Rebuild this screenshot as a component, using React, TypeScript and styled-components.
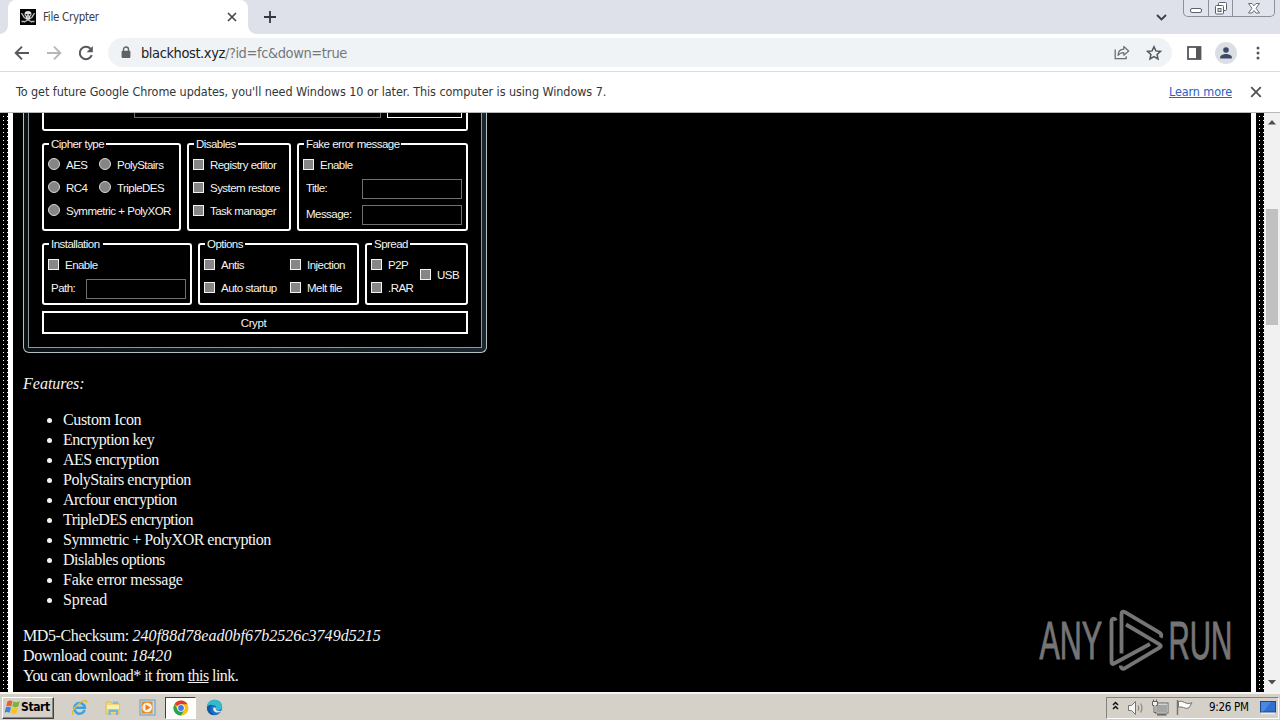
import React from 'react';
import styled, { createGlobalStyle } from 'styled-components';

const Global = createGlobalStyle`
  * { box-sizing: border-box; }
  html, body { margin: 0; padding: 0; background: #000; overflow: hidden; }
  ul, p { margin: 0; }
`;

const ui = `'DejaVu Sans Condensed', 'DejaVu Sans', sans-serif`;

const Screen = styled.div`
  width: 1280px;
  height: 720px;
  display: flex;
  flex-direction: column;
  overflow: hidden;
  font-family: ${ui};
`;

const TabStrip = styled.div`
  height: 34px;
  flex: none;
  display: flex;
  align-items: stretch;
  background: #dee1e9;
`;
const Tab = styled.div`
  position: relative;
  width: 240px;
  margin-left: 8px;
  background: #fff;
  border-radius: 8px 8px 0 0;
  display: flex;
  align-items: center;
  padding: 0 10px 0 12px;
  &::before, &::after {
    content: '';
    position: absolute;
    bottom: 0;
    width: 8px;
    height: 8px;
  }
  &::before { left: -8px; background: radial-gradient(circle at 0 0, transparent 7.5px, #fff 8px); }
  &::after { right: -8px; background: radial-gradient(circle at 100% 0, transparent 7.5px, #fff 8px); }
`;
const TabTitle = styled.span`
  flex: 1;
  margin-left: 7px;
  font-size: 11.5px;
  letter-spacing: -0.3px;
  color: #3c4043;
`;
const NewTab = styled.div`
  width: 44px;
  display: flex;
  align-items: center;
  justify-content: center;
`;
const Spacer = styled.div`flex: 1;`;
const TabSearch = styled.div`
  display: flex;
  align-items: center;
  margin-right: 16px;
`;
const Caption = styled.div`
  width: 92px;
  height: 17px;
  margin-right: 5px;
  display: flex;
  border: 1px solid #8b909a;
  border-top: 0;
  border-radius: 0 0 5px 5px;
  background: #e1e4ec;
`;
const CaptionButton = styled.div<{ $w: number }>`
  width: ${p => p.$w}px;
  display: flex;
  justify-content: center;
  & + & { border-left: 1px solid #8b909a; }
`;

const Toolbar = styled.div`
  height: 38px;
  flex: none;
  display: flex;
  align-items: center;
  background: #fff;
  border-bottom: 1px solid #dadce0;
  padding-left: 14px;
`;
const ToolButton = styled.div<{ $w: number }>`
  width: ${p => p.$w}px;
  flex: none;
  display: flex;
  align-items: center;
  justify-content: center;
`;
const Omnibox = styled.div`
  flex: none;
  width: 1064px;
  height: 29px;
  margin: 0 6px 0 14px;
  display: flex;
  align-items: center;
  padding: 0 2px 0 13px;
  border-radius: 15px;
  background: #f0f3f5;
`;
const Url = styled.span`
  flex: 1;
  margin-left: 10px;
  font-size: 14.5px;
  letter-spacing: -0.41px;
  color: #74787c;
  & b { font-weight: 400; color: #202124; }
`;
const Avatar = styled.div`
  width: 22px;
  height: 22px;
  border-radius: 50%;
  background: #dbdfe4;
  display: flex;
  align-items: center;
  justify-content: center;
`;

const InfoBar = styled.div`
  height: 41px;
  flex: none;
  display: flex;
  align-items: center;
  padding: 0 18px 1px 16px;
  background: #fff;
  border-bottom: 1px solid #b8b8b8;
  font-size: 12.5px;
  color: #333639;
`;
const InfoText = styled.span`
  flex: 1;
  letter-spacing: -0.07px;
`;
const InfoLink = styled.a`
  color: #2a62c4;
  text-decoration: underline;
  margin-right: 18px;
  letter-spacing: -0.1px;
`;

const Viewport = styled.div`
  height: 579px;
  flex: none;
  display: flex;
  background: #000;
`;
const Dots = styled.div`
  width: 8px;
  flex: none;
  background-color: #000;
  background-image: conic-gradient(from 90deg at 3px 3px, #fff 90deg, transparent 0);
  background-size: 4px 4px;
`;
const Page = styled.main`
  flex: 1;
  border: solid #fff;
  border-width: 0 5px;
  padding-left: 10px;
  overflow: hidden;
  background: #000;
  color: #f4f4f4;
  font-family: 'Liberation Serif', serif;
  font-size: 16px;
  line-height: 20px;
`;
const Scrollbar = styled.div`
  width: 16px;
  flex: none;
  background: #f1f1f1;
  display: flex;
  flex-direction: column;
  align-items: center;
  padding: 7px 0;
`;
const Thumb = styled.div`
  width: 12px;
  height: 116px;
  margin-top: 84px;
  background: #c1c1c1;
`;

const Frame = styled.div`
  width: 464px;
  height: 240px;
  padding: 0 4px 4px;
  border: 1px solid #b4bfc4;
  border-top: 0;
  border-radius: 0 0 6px 6px;
  background: linear-gradient(90deg, #0c1316, #111b1f 40%, #1a262d);
`;
const FrameBody = styled.div`
  height: 235px;
  padding: 0 13px;
  border: 1px solid #8d989d;
  border-top: 0;
  background: #000;
  font-family: 'Liberation Sans', sans-serif;
  font-size: 11.5px;
  line-height: 14px;
  letter-spacing: -0.54px;
  word-spacing: 0.2px;
  color: #f4f4f4;
  white-space: nowrap;
`;
const FileGroup = styled.div`
  height: 18px;
  border: 2px solid #fff;
  border-top: 0;
  border-radius: 0 0 3px 3px;
  display: flex;
  justify-content: flex-end;
  padding-right: 4px;
`;
const FileField = styled.div`
  width: 247px;
  height: 5px;
  border: 1px solid #6a6a6a;
  border-top: 0;
  margin-right: 6px;
`;
const BrowseButton = styled.div`
  width: 75px;
  height: 5px;
  border: 1px solid #fff;
  border-top: 0;
`;
const GroupRow = styled.div`
  display: flex;
  gap: 6px;
  margin-top: 12px;
`;
const Group = styled.section<{ $w: number; $h: number }>`
  position: relative;
  width: ${p => p.$w}px;
  height: ${p => p.$h}px;
  border: 2px solid #fff;
  border-radius: 3px;
  padding: 8px 4px 0;
`;
const Legend = styled.span<{ $w: number }>`
  position: absolute;
  top: -8px;
  left: 5px;
  width: ${p => p.$w}px;
  padding-left: 2px;
  background: #000;
`;
const Line = styled.div<{ $h?: number }>`
  display: flex;
  align-items: center;
  height: ${p => p.$h ?? 23}px;
`;
const OptionLabel = styled.label<{ $w?: number }>`
  display: flex;
  align-items: center;
  gap: 6px;
  width: ${p => (p.$w ? p.$w + 'px' : 'auto')};
`;
const Check = styled.i`
  width: 11px;
  height: 11px;
  flex: none;
  border: 1px solid #f2f2f2;
  background: #868686;
`;
const Radio = styled.i`
  width: 12px;
  height: 12px;
  flex: none;
  margin-bottom: 1px;
  border: 1px solid #d8d8d8;
  border-radius: 50%;
  background: #858585;
`;
const FieldLabel = styled.span<{ $w: number }>`
  width: ${p => p.$w}px;
  padding: 0 0 2px 3px;
`;
const Field = styled.div`
  width: 100px;
  height: 20px;
  border: 1px solid #707070;
`;
const Columns = styled.div<{ $first: number }>`
  display: grid;
  grid-template-columns: ${p => p.$first}px auto;
  align-items: center;
`;
const SideColumn = styled.div`
  padding-bottom: 3px;
`;
const CryptButton = styled.div`
  height: 23px;
  margin-top: 6px;
  border: 2px solid #fff;
  display: flex;
  align-items: center;
  justify-content: center;
  padding-right: 3px;
  letter-spacing: -0.4px;
`;

const Features = styled.p`
  margin-top: 21px;
  font-style: italic;
`;
const FeatureList = styled.ul`
  margin: 16px 0;
  padding-left: 40px;
`;
const Feature = styled.li<{ $track: number }>`
  letter-spacing: ${p => p.$track}px;
`;
const Info = styled.p`
  letter-spacing: -0.4px;
  & em { letter-spacing: 0.04px; }
`;
const DownloadLine = styled.span`
  letter-spacing: -0.56px;
  & u { text-underline-offset: 1px; }
`;

const Watermark = styled.div`
  position: absolute;
  left: 1036px;
  top: 606px;
`;

const Taskbar = styled.div`
  flex: 1;
  display: flex;
  align-items: center;
  background: #d5d0c8;
  border-top: 2px solid #f6f4f0;
  padding: 1px 1px 0 2px;
`;
const StartButton = styled.div`
  width: 52px;
  height: 22px;
  display: flex;
  align-items: center;
  padding: 0 0 2px 1px;
  border: 1px solid;
  border-color: #fff #404040 #404040 #fff;
  box-shadow: inset -1px -1px #8a8680;
  font-size: 12px;
  font-weight: 700;
  letter-spacing: -0.4px;
  color: #000;
`;
const Launch = styled.div<{ $active?: boolean }>`
  width: ${p => (p.$active ? 31 : 34)}px;
  height: 22px;
  display: flex;
  align-items: center;
  justify-content: center;
  ${p => p.$active && `
    margin: 0 1px;
    background: #fdfdfc;
    border: 1px solid;
    border-color: #404040 #fff #fff #404040;
  `}
`;
const LaunchBar = styled.div`
  display: flex;
  margin-left: 8px;
`;
const Tray = styled.div`
  width: 173px;
  height: 22px;
  display: flex;
  align-items: center;
  border: 1px solid;
  border-color: #85817b #fff #fff #85817b;
  padding-left: 5px;
  font-size: 11.5px;
  letter-spacing: -0.3px;
  color: #000;
`;
const Clock = styled.span`
  width: 51px;
  margin-left: 15px;
  padding-bottom: 1px;
  white-space: nowrap;
`;

const Skull = () => (
  <svg width="16" height="16" viewBox="0 0 16 16">
    <rect width="16" height="16" fill="#050505" />
    <path d="M1.500 4 4 8.200l8 5M14.500 4 12 8.200l-8 5M1.500 12.500h3M11.500 12.500h3" stroke="#bdbdbd" strokeWidth="1.300" fill="none" />
    <path d="M4.500 5.200C4.500 3 6 2 8 2s3.500 1 3.500 3.200c0 1.300-.6 2-1.500 2.600V10H6V7.800c-.9-.6-1.500-1.300-1.500-2.600Z" fill="#e2e2e2" />
    <path d="M5.700 5h1.700v1.500H5.700zM8.700 5h1.700v1.500H8.700zM7.600 7.500h.9v1h-.9z" fill="#111" />
  </svg>
);
const Cross = ({ size, width, color }: { size: number; width: number; color: string }) => (
  <svg width={size} height={size} viewBox="0 0 10 10">
    <path d="m1 1 8 8M9 1 1 9" stroke={color} strokeWidth={width} />
  </svg>
);
const Plus = () => (
  <svg width="12" height="12" viewBox="0 0 12 12"><path d="M6 0v12M0 6h12" stroke="#35383d" strokeWidth="1.800" /></svg>
);
const Arrow = ({ color, flip }: { color: string; flip?: boolean }) => (
  <svg width="16" height="16" viewBox="0 0 16 16">
    <path d={flip ? 'M1 8h13M8 1.700 14.300 8 8 14.300' : 'M15 8H2M8 1.700 1.700 8 8 14.300'} fill="none" stroke={color} strokeWidth="1.900" />
  </svg>
);
const Reload = () => (
  <svg width="16" height="16" viewBox="0 0 16 16">
    <path d="M13.800 10.200A6.200 6.200 0 1 1 12.500 3.700" fill="none" stroke="#55585c" strokeWidth="2" />
    <path d="M14.800 1v6.200H8.600Z" fill="#55585c" />
  </svg>
);
const Lock = () => (
  <svg width="10" height="13" viewBox="0 0 10 13">
    <path d="M2.500 6V3.500a2.500 2.500 0 0 1 5 0V6" fill="none" stroke="#5f6368" strokeWidth="1.400" />
    <rect x="0.600" y="4.700" width="8.800" height="7.300" rx="1" fill="#5f6368" />
  </svg>
);
const Share = () => (
  <svg width="16" height="15" viewBox="0 0 16 15">
    <path d="M1.200 4.500v9.200h11V11.200" fill="none" stroke="#6a6e72" strokeWidth="1.300" />
    <path d="M4 10.300C4.200 6.600 6.300 4.400 9.800 4.200V1.500L14.700 6l-4.900 4.200V7.600C7.200 7.600 5.400 8.500 4 10.300Z" fill="none" stroke="#6a6e72" strokeWidth="1.200" strokeLinejoin="round" />
  </svg>
);
const Star = () => (
  <svg width="16" height="16" viewBox="0 0 16 16">
    <path d="m8 1.700 1.900 4.200 4.600.5-3.400 3.100.9 4.500-4-2.300L4 14l.9-4.500-3.400-3.100 4.600-.5Z" fill="none" stroke="#55585c" strokeWidth="1.500" />
  </svg>
);
const SidePanel = () => (
  <svg width="15" height="14" viewBox="0 0 15 14">
    <rect x="1" y="1" width="12.500" height="12" fill="none" stroke="#55575b" strokeWidth="1.800" />
    <path d="M9 1h5v12H9z" fill="#55575b" />
  </svg>
);
const Person = () => (
  <svg width="14" height="14" viewBox="0 0 14 14">
    <circle cx="7" cy="4" r="2.800" fill="#3c4a68" />
    <path d="M1.200 12.500V11c0-2 3.800-3 5.800-3s5.800 1 5.800 3v1.500Z" fill="#3c4a68" />
  </svg>
);
const Menu = () => (
  <svg width="4" height="14" viewBox="0 0 4 14">
    <circle cx="2" cy="2" r="1.500" fill="#55585c" /><circle cx="2" cy="7" r="1.500" fill="#55585c" /><circle cx="2" cy="12" r="1.500" fill="#55585c" />
  </svg>
);
const Triangle = ({ down }: { down?: boolean }) => (
  <svg width="8" height="5" viewBox="0 0 8 5"><path d={down ? 'M0 0h8L4 4.500Z' : 'M0 4.500h8L4 0Z'} fill="#505050" /></svg>
);

const AnyRun = () => (
  <svg width="210" height="70" viewBox="0 0 210 70">
    <g fill="#757575" stroke="#757575" strokeWidth="1" fontFamily="'Liberation Sans', sans-serif" fontSize="53">
      <text transform="translate(3.500 53) scale(.575 1)">ANY</text>
      <text transform="translate(132.500 53) scale(.555 1)">RUN</text>
    </g>
    <g fill="none" stroke="#757575" strokeWidth="3.800" strokeLinejoin="round" strokeLinecap="butt">
      <path d="M80 14.500c-1.500-3-4.500-2-4.500 1v40.500c0 2 1 2.500 2.500 1.500L114 38" />
      <path d="M85.500 47.500V8c0-2.300 1.500-3 3.500-1.800l34.500 20.500c2 1.300 2.300 3 1 4.800" />
      <path d="m90 18.500 33.500 19.800c1.800 1.100 1.800 2.200 0 3.300L89 62.200c-2.300 1.200-4.300.5-4.300-2.700" />
    </g>
  </svg>
);

const WindowsFlag = () => (
  <svg width="17" height="16" viewBox="0 0 17 16">
    <path d="M3.500 2.200C5.500 1 7 1.300 8.500 2.200L7.200 7.500C5.500 6.500 4 6.600 2.200 7.400Z" fill="#e8612c" />
    <path d="M9.400 2.500c2 1 4 1 6.400-.3l-1.500 5.400c-2.200 1.100-4 1-6.100 0Z" fill="#7cb342" />
    <path d="M2 8.300c1.800-.9 3.300-.8 5 .1l-1.400 5.300c-1.600-1-3.100-1-5-.1Z" fill="#3d86d6" />
    <path d="M7.900 8.800c2 1 3.900 1 6.100 0l-1.400 5.100c-2.200 1.200-4 1.100-6.100.1Z" fill="#f7c325" />
  </svg>
);
const Explorer = () => (
  <svg width="17" height="17" viewBox="0 0 17 17">
    <path d="M13.700 10.900A5.300 5.300 0 1 1 13.900 8.800H5" fill="none" stroke="#3aa2e4" strokeWidth="2.500" />
    <path d="M2.400 15.500C-.5 14.500 3 8.500 7.500 5 12 1.300 16.500.3 15.600 3.800" fill="none" stroke="#e5b92e" strokeWidth="1.300" />
  </svg>
);
const Folder = () => (
  <svg width="16" height="16" viewBox="0 0 16 16">
    <path d="M1 2h5l1 1.500h7V14H1Z" fill="#f2d673" stroke="#d2b75d" strokeWidth=".7" />
    <path d="M8 1.500h5V4H8z" fill="#7fc1d8" /><path d="M2 5h12v4H2z" fill="#fbeeb2" />
    <path d="M3.500 15v-5.500h9.500V15h-2v-3H5.500v3Z" fill="#6db6dd" />
  </svg>
);
const Player = () => (
  <svg width="17" height="17" viewBox="0 0 17 17">
    <rect x="1" y="1" width="15" height="15" fill="#c5dcec" stroke="#6d9cc0" />
    <rect x="2.500" y="2.500" width="11" height="12" fill="#f08a1d" />
    <circle cx="8.200" cy="8.500" r="4.800" fill="#fdf3e4" /><path d="m6.500 5.500 5 3-5 3Z" fill="#ec7a12" />
  </svg>
);
const Chrome = () => (
  <svg width="16" height="16" viewBox="0 0 16 16">
    <circle cx="8" cy="8" r="7.500" fill="#fbc116" />
    <path d="M8 8 1.500 4.250A7.500 7.500 0 0 1 14.500 4.250H8Z" fill="#e33b2e" />
    <path d="M8 8 4.800 9.900 1.500 4.250A7.500 7.500 0 0 0 8 15.500l3.200-5.600Z" fill="#2da14c" />
    <circle cx="8" cy="8" r="3.700" fill="#fff" /><circle cx="8" cy="8" r="2.900" fill="#3c7de8" />
  </svg>
);
const Edge = () => (
  <svg width="17" height="17" viewBox="0 0 17 17">
    <circle cx="8.500" cy="8.500" r="7.700" fill="#1673c9" />
    <path d="M.8 7.500C1.500 3 5 .8 8.700.8c4.500 0 7.500 3.200 7.500 6.600 0 2.400-1.700 3.800-3.800 3.800-1.700 0-2.800-.6-2.400-1.600.7-1.700-.7-3.500-3-3.500C4 6.100 1.800 8 .8 7.500Z" fill="#36b9c8" />
    <path d="M10 9.600c-.5 1.300.8 2.500 3 2.500 1.500 0 2.500-.5 2.600-.3-1 1.200-2.500 1.800-4 1.800-3 0-5-2-4.300-4.500.3-1 1.500-1.300 2.700.5Z" fill="#e3e4e2" />
    <path d="M1 9c.5-3 4-4 6-2.700-3 .3-4.200 5.700 1.500 9.900C4 16.200.8 13 1 9Z" fill="#1458a8" />
  </svg>
);
const TrayIcons = () => (
  <svg width="82" height="18" viewBox="0 0 82 18">
    <path d="m1 6 2.500-2.500L6 6M1 10l2.500-2.500L6 10" fill="none" stroke="#111" strokeWidth="1.500" />
    <path d="M16.500 6.500h3l4-4v13l-4-4h-3Z" fill="#f7f7f5" stroke="#77756f" />
    <path d="M26 6.500q1.700 2.500 0 5M28.500 4.500q3 4.500 0 9" fill="none" stroke="#8b8984" strokeWidth="1.200" />
    <rect x="44.500" y="5" width="11" height="8.500" fill="#a4a5a7" stroke="#fff" /><rect x="43.500" y="4" width="12.500" height="10" fill="none" stroke="#66645f" />
    <path d="M45 15.800h9.500" stroke="#66645f" strokeWidth="1.500" />
    <path d="M40.500 2.500h5v4h-1.500v7h-2v-7h-1.500ZM41.500 .5v2M44.500 .5v2" fill="#eee" stroke="#66645f" />
    <path d="M65.500 1v15" stroke="#77756f" strokeWidth="1.500" />
    <path d="M66.500 2.500q3.500-1 6 1 3 2 7.500.3l-3 5q-3 1.500-5.500-.3-2.500-1-5-.2Z" fill="#fbfbfa" stroke="#77756f" />
  </svg>
);
const Desktop = () => (
  <svg width="16" height="15" viewBox="0 0 16 15">
    <rect x=".5" y="1.500" width="15" height="10.500" fill="#2e6fd0" stroke="#1f478f" />
    <path d="M1 2h10L3.500 11.500H1Z" fill="#5b9ae8" opacity=".6" />
    <path d="M1 13.500h14" stroke="#e7eef7" strokeWidth="1.500" />
  </svg>
);

const CheckOption = ({ text, w }: { text: string; w?: number }) => (
  <OptionLabel $w={w}><Check />{text}</OptionLabel>
);
const RadioOption = ({ text, w }: { text: string; w?: number }) => (
  <OptionLabel $w={w}><Radio />{text}</OptionLabel>
);

const features: [string, number][] = [
  ['Custom Icon', -0.36],
  ['Encryption key', -0.5],
  ['AES encryption', -0.5],
  ['PolyStairs encryption', -0.5],
  ['Arcfour encryption', -0.52],
  ['TripleDES encryption', -0.56],
  ['Symmetric + PolyXOR encryption', -0.5],
  ['Dislables options', -0.52],
  ['Fake error message', -0.26],
  ['Spread', -0.05],
];

export default function App() {
  return (
    <Screen>
      <Global />
      <TabStrip>
        <Tab>
          <Skull />
          <TabTitle>File Crypter</TabTitle>
          <ToolButton $w={12}><Cross size={10} width={1.7} color="#45484c" /></ToolButton>
        </Tab>
        <NewTab><Plus /></NewTab>
        <Spacer />
        <TabSearch>
          <svg width="11" height="7" viewBox="0 0 11 7"><path d="m1 1 4.500 4.500L10 1" fill="none" stroke="#3c4043" strokeWidth="1.900" /></svg>
        </TabSearch>
        <Caption>
          <CaptionButton $w={24}>
            <svg width="14" height="16" viewBox="0 0 14 16"><rect x="1.500" y="8.500" width="11" height="4" rx="1.500" fill="#fff" stroke="#5b606b" /></svg>
          </CaptionButton>
          <CaptionButton $w={25}>
            <svg width="14" height="16" viewBox="0 0 14 16">
              <rect x="4.500" y="2.500" width="8" height="8" rx="1" fill="#fff" stroke="#5b606b" />
              <rect x="1.500" y="5.500" width="8" height="8.500" rx="1" fill="#fff" stroke="#5b606b" />
              <rect x="4" y="8.500" width="3" height="3" fill="#dfe2ea" stroke="#5b606b" />
            </svg>
          </CaptionButton>
          <CaptionButton $w={42}>
            <svg width="14" height="16" viewBox="0 0 14 16">
              <path d="M1.500 3.500h3.500l2 2.300 2-2.300h3.500L9 8.300l3.500 4.700H9L7 10.500 5 13H1.500L5 8.300Z" fill="#fff" stroke="#5b606b" strokeWidth=".9" />
            </svg>
          </CaptionButton>
        </Caption>
      </TabStrip>

      <Toolbar>
        <ToolButton $w={16}><Arrow color="#55585c" /></ToolButton>
        <ToolButton $w={48}><Arrow color="#b4b6b9" flip /></ToolButton>
        <ToolButton $w={16}><Reload /></ToolButton>
        <Omnibox>
          <Lock />
          <Url><b>blackhost.xyz</b>/?id=fc&amp;down=true</Url>
          <ToolButton $w={32}><Share /></ToolButton>
          <ToolButton $w={32}><Star /></ToolButton>
        </Omnibox>
        <ToolButton $w={32}><SidePanel /></ToolButton>
        <ToolButton $w={32}><Avatar><Person /></Avatar></ToolButton>
        <ToolButton $w={32}><Menu /></ToolButton>
      </Toolbar>

      <InfoBar>
        <InfoText>To get future Google Chrome updates, you'll need Windows 10 or later. This computer is using Windows 7.</InfoText>
        <InfoLink>Learn more</InfoLink>
        <Cross size={12} width={1.5} color="#505356" />
      </InfoBar>

      <Viewport>
        <Dots />
        <Page>
          <Frame>
            <FrameBody>
              <FileGroup>
                <FileField />
                <BrowseButton />
              </FileGroup>
              <GroupRow>
                <Group $w={139} $h={88}>
                  <Legend $w={57}>Cipher type</Legend>
                  <Line><RadioOption text="AES" w={51} /><RadioOption text="PolyStairs" /></Line>
                  <Line><RadioOption text="RC4" w={51} /><RadioOption text="TripleDES" /></Line>
                  <Line><RadioOption text="Symmetric + PolyXOR" /></Line>
                </Group>
                <Group $w={104} $h={88}>
                  <Legend $w={44}>Disables</Legend>
                  <Line><CheckOption text="Registry editor" /></Line>
                  <Line><CheckOption text="System restore" /></Line>
                  <Line><CheckOption text="Task manager" /></Line>
                </Group>
                <Group $w={171} $h={88}>
                  <Legend $w={97}>Fake error message</Legend>
                  <Line><CheckOption text="Enable" /></Line>
                  <Line $h={26}><FieldLabel $w={59}>Title:</FieldLabel><Field /></Line>
                  <Line $h={26}><FieldLabel $w={59}>Message:</FieldLabel><Field /></Line>
                </Group>
              </GroupRow>
              <GroupRow>
                <Group $w={150} $h={62}>
                  <Legend $w={54}>Installation</Legend>
                  <Line><CheckOption text="Enable" /></Line>
                  <Line $h={25}><FieldLabel $w={38}>Path:</FieldLabel><Field /></Line>
                </Group>
                <Group $w={161} $h={62}>
                  <Legend $w={40}>Options</Legend>
                  <Line><CheckOption text="Antis" w={86} /><CheckOption text="Injection" /></Line>
                  <Line><CheckOption text="Auto startup" w={86} /><CheckOption text="Melt file" /></Line>
                </Group>
                <Group $w={103} $h={62}>
                  <Legend $w={38}>Spread</Legend>
                  <Columns $first={49}>
                    <div>
                      <Line><CheckOption text="P2P" /></Line>
                      <Line><CheckOption text=".RAR" /></Line>
                    </div>
                    <SideColumn><CheckOption text="USB" /></SideColumn>
                  </Columns>
                </Group>
              </GroupRow>
              <CryptButton>Crypt</CryptButton>
            </FrameBody>
          </Frame>
          <Features>Features:</Features>
          <FeatureList>
            {features.map(([text, track]) => <Feature key={text} $track={track}>{text}</Feature>)}
          </FeatureList>
          <Info>
            MD5-Checksum: <em>240f88d78ead0bf67b2526c3749d5215</em><br />
            Download count: <em>18420</em><br />
            <DownloadLine>You can download* it from <u>this</u> link.</DownloadLine>
          </Info>
        </Page>
        <Dots />
        <Scrollbar>
          <Triangle />
          <Thumb />
          <Spacer />
          <Triangle down />
        </Scrollbar>
      </Viewport>

      <Taskbar>
        <StartButton><WindowsFlag />Start</StartButton>
        <LaunchBar>
          <Launch><Explorer /></Launch>
          <Launch><Folder /></Launch>
          <Launch><Player /></Launch>
          <Launch $active><Chrome /></Launch>
          <Launch><Edge /></Launch>
        </LaunchBar>
        <Spacer />
        <Tray>
          <TrayIcons />
          <Clock>9:26 PM</Clock>
          <Desktop />
        </Tray>
      </Taskbar>
      <Watermark><AnyRun /></Watermark>
    </Screen>
  );
}
